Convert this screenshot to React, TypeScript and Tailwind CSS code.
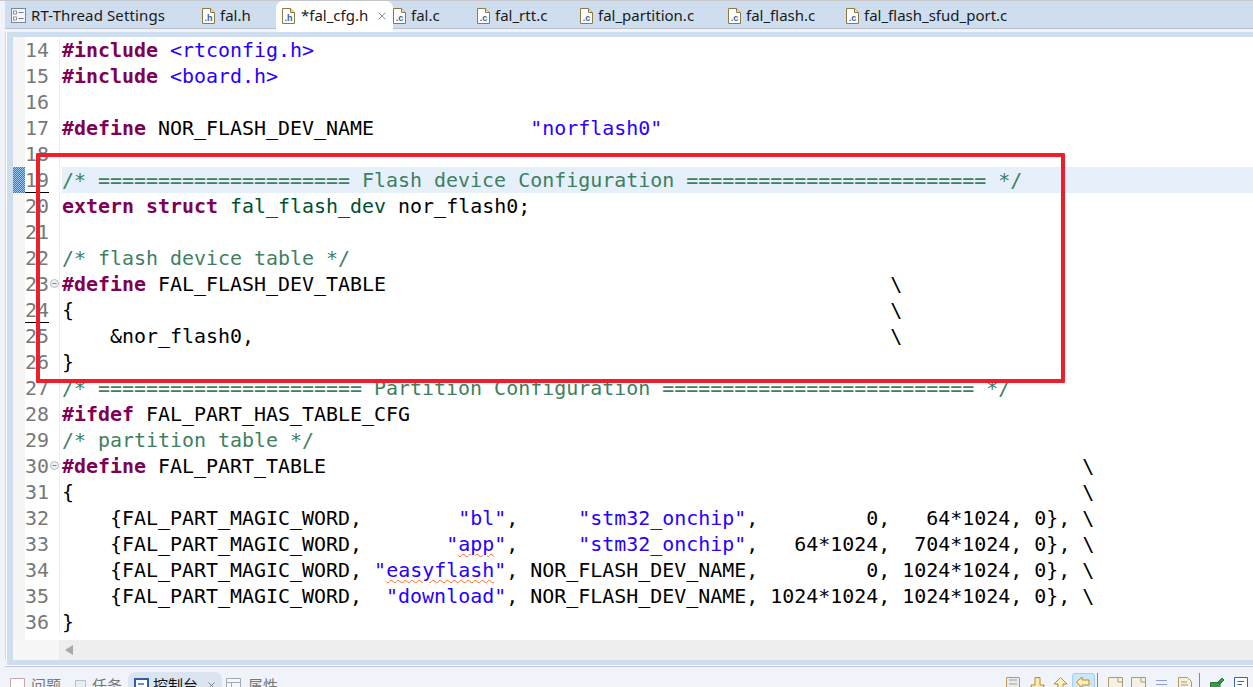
import type { ReactNode } from "react";
import { X } from "lucide-react";

const K = ({ children }: { children: ReactNode }) => (
  <span className="font-bold text-[#7f0055]">{children}</span>
);
const S = ({ children }: { children: ReactNode }) => <span className="text-[#2a00ff]">{children}</span>;
const C = ({ children }: { children: ReactNode }) => <span className="text-[#3f7f5f]">{children}</span>;

const Squiggle = ({ children }: { children: ReactNode }) => (
  <span className="underline decoration-wavy decoration-[#ff6a2a] decoration-1 underline-offset-2">{children}</span>
);

const lines: { n: number; fold?: boolean; active?: boolean; code: ReactNode }[] = [
  { n: 14, code: <><K>#include</K> <S>&lt;rtconfig.h&gt;</S></> },
  { n: 15, code: <><K>#include</K> <S>&lt;board.h&gt;</S></> },
  { n: 16, code: "" },
  { n: 17, code: <><K>#define</K> NOR_FLASH_DEV_NAME             <S>"norflash0"</S></> },
  { n: 18, code: "" },
  { n: 19, active: true, code: <C>/* ===================== Flash device Configuration ========================= */</C> },
  { n: 20, code: <><K>extern struct</K> <span className="text-[#005032]">fal_flash_dev</span> nor_flash0;</> },
  { n: 21, code: "" },
  { n: 22, code: <C>/* flash device table */</C> },
  { n: 23, fold: true, code: <><K>#define</K> FAL_FLASH_DEV_TABLE                                          \</> },
  { n: 24, code: "{                                                                    \\" },
  { n: 25, code: "    &nor_flash0,                                                     \\" },
  { n: 26, code: "}" },
  { n: 27, code: <C>/* ====================== Partition Configuration ========================== */</C> },
  { n: 28, code: <><K>#ifdef</K> FAL_PART_HAS_TABLE_CFG</> },
  { n: 29, code: <C>/* partition table */</C> },
  { n: 30, fold: true, code: <><K>#define</K> FAL_PART_TABLE                                                               \</> },
  { n: 31, code: "{                                                                                    \\" },
  { n: 32, code: <>    {"{"}FAL_PART_MAGIC_WORD,        <S>"bl"</S>,     <S>"stm32_onchip"</S>,         0,   64*1024, 0{"}"}, \</> },
  { n: 33, code: <>    {"{"}FAL_PART_MAGIC_WORD,       <S>"<Squiggle>app</Squiggle>"</S>,     <S>"stm32_onchip"</S>,   64*1024,  704*1024, 0{"}"}, \</> },
  { n: 34, code: <>    {"{"}FAL_PART_MAGIC_WORD, <S>"<Squiggle>easyflash</Squiggle>"</S>, NOR_FLASH_DEV_NAME,         0, 1024*1024, 0{"}"}, \</> },
  { n: 35, code: <>    {"{"}FAL_PART_MAGIC_WORD,  <S>"download"</S>, NOR_FLASH_DEV_NAME, 1024*1024, 1024*1024, 0{"}"}, \</> },
  { n: 36, code: "}" },
];

const FileIcon = ({ letter }: { letter: string }) => (
  <svg width="13" height="16" viewBox="0 0 13 16" className="shrink-0">
    <path d="M0.5 0.5H8.5L12.5 4.5V15.5H0.5Z" fill="#fff" stroke="#8f7a45" />
    <path d="M8.5 0.5V4.5H12.5" fill="#e8e0c4" stroke="#8f7a45" />
    <text x="6.5" y="12.5" textAnchor="middle" fontSize="9" fontWeight="700" fill="#3a5f8f" fontFamily="Liberation Sans, sans-serif">
      {letter}
    </text>
  </svg>
);

const SettingsIcon = () => (
  <svg width="15" height="15" viewBox="0 0 15 15" className="shrink-0">
    <rect x="0.5" y="0.5" width="14" height="14" fill="#f4f6fa" stroke="#7c8794" />
    <rect x="2.5" y="3" width="3" height="3" fill="#fff" stroke="#6c7a8a" strokeWidth="0.8" />
    <rect x="2.5" y="9" width="3" height="3" fill="#fff" stroke="#6c7a8a" strokeWidth="0.8" />
    <path d="M7.5 4.5H12.5M7.5 10.5H12.5" stroke="#6c7a8a" />
  </svg>
);

const tabs = [
  { label: "fal.h", letter: ".h", width: "w-[74px]" },
  { label: "*fal_cfg.h", letter: ".h", width: "w-[117px]", active: true },
  { label: "fal.c", letter: ".c", width: "w-[84px]" },
  { label: "fal_rtt.c", letter: ".c", width: "w-[103px]" },
  { label: "fal_partition.c", letter: ".c", width: "w-[148px]" },
  { label: "fal_flash.c", letter: ".c", width: "w-[118px]" },
  { label: "fal_flash_sfud_port.c", letter: ".c", width: "w-[190px]" },
];

function TabBar() {
  return (
    <div className="relative h-[32px] shrink-0 bg-[#f0f3fa]">
      <div className="h-[1px] bg-[#c6c8cc]" />
      <div className="h-[28px] bg-[#cfdeee] border-b border-[#b9c0cc] ml-[5px]" />
      <div className="absolute left-[5px] top-[1px] flex h-[31px] items-start font-['Noto_Sans'] text-[15px] text-[#1a1a1a]">
        <div className="flex h-[29px] w-[197px] items-center gap-[5px] pl-[6px]">
          <SettingsIcon />
          <span className="tracking-[0.12px]">RT-Thread Settings</span>
        </div>
        {tabs.map((t) => (
          <div
            key={t.label}
            className={
              t.active
                ? `flex h-[31px] ${t.width} items-center gap-[6px] rounded-t-[7px] bg-white pb-[2px] pl-[6px]`
                : `flex h-[29px] ${t.width} items-center gap-[5px] ${t.letter === ".h" ? "pl-0" : "pl-0"}`
            }
          >
            <FileIcon letter={t.letter} />
            <span className="whitespace-nowrap">{t.label}</span>
            {t.active && <X className="ml-[2px] h-[12px] w-[12px] text-[#8a8f96]" strokeWidth={2} />}
          </div>
        ))}
      </div>
    </div>
  );
}

function Row({ n, fold, active, code }: (typeof lines)[number]) {
  return (
    <div className="flex h-[26px] leading-[26px]">
      <div className="relative w-[12px] shrink-0 bg-[#f5f5f5]">
        {active && (
          <div className="h-full w-full bg-[#1b7fd8] bg-[repeating-conic-gradient(#1b7fd8_0_25%,#9cc8f2_0_50%)] bg-[length:2px_2px]" />
        )}
      </div>
      <div className="relative flex w-[34px] shrink-0 bg-white text-[#787878]">
        <span className="w-[24px]">{n}</span>
        {fold && (
          <svg width="9" height="9" viewBox="0 0 9 9" className="absolute left-[25px] top-[8px]">
            <circle cx="4.5" cy="4.5" r="4" fill="#eef0f3" stroke="#b4bac2" />
            <path d="M2.5 4.5H6.5" stroke="#7d8794" />
          </svg>
        )}
        {(n === 19 || n === 24) && <div className="absolute left-0 bottom-0 h-[1px] w-[24px] bg-black" />}
      </div>
      <div className="w-[3px] shrink-0 border-l border-[#eeeeee] bg-white" />
      <div className={`flex-1 whitespace-pre ${active ? "bg-[#e6f0fb]" : "bg-white"}`}>{code}</div>
    </div>
  );
}

function Editor() {
  return (
    <div className="flex h-[628px] shrink-0 bg-[#f0f3fa]">
      <div className="ml-[5px] w-[2px] shrink-0 border-l border-[#d4d8e0] bg-white" />
      <div className="flex min-w-0 flex-1 flex-col bg-[#cfdeee] pl-[6px] pt-[5px]">
        <div className="font-['DejaVu_Sans_Mono'] text-[19.95px] text-black">
          {lines.map((l) => (
            <Row key={l.n} {...l} />
          ))}
        </div>
        <div className="flex h-[5px]">
          <div className="w-[12px] bg-[#f5f5f5]" />
          <div className="w-[34px] bg-white" />
          <div className="flex-1 bg-white" />
        </div>
        <div className="flex h-[20px]">
          <div className="w-[46px] bg-[#f7f7f7]" />
          <div className="flex flex-1 items-center bg-[#eeeeee] pl-[6px]">
            <svg width="8" height="10" viewBox="0 0 8 10">
              <path d="M8 0V10L0 5Z" fill="#a8a8a8" />
            </svg>
          </div>
        </div>
      </div>
    </div>
  );
}

const PlainToolIcon = ({ path, fill, stroke }: { path: string; fill: string; stroke: string }) => (
  <svg width="15" height="15" viewBox="0 0 15 15" className="shrink-0">
    <path d={path} fill={fill} stroke={stroke} />
  </svg>
);

function BottomBar() {
  return (
    <div className="flex-1 bg-[#f0f3fa] font-['Noto_Sans','Noto_Sans_CJK_SC',sans-serif] text-[15px] text-[#777]">
      <div className="h-[5px] bg-[#cfdeee] ml-[7px]" />
      <div className="h-[2px] border-b border-[#c8c4d8] bg-white ml-[5px]" />
      <div className="flex h-[20px] items-start justify-between pt-[5px]">
        <div className="flex items-start pl-[6px]">
          <div className="flex items-center gap-[6px] pl-[4px] pr-[12px] pt-[3px] leading-[20px]">
            <PlainToolIcon path="M0.5 0.5H14.5V14.5H0.5Z" fill="#fff" stroke="#c9a6a6" />
            <span>问题</span>
          </div>
          <div className="flex items-center gap-[4px] pr-[6px] pt-[3px] leading-[20px]">
            <PlainToolIcon path="M2.5 2.5H12.5V14.5H2.5Z" fill="#e8eef6" stroke="#b8bcc4" />
            <span>任务</span>
          </div>
          <div className="flex w-[94px] items-center gap-[4px] rounded-t-[7px] bg-[#dbe5f1] pl-[6px] pt-[3px] leading-[20px] text-[#111]">
            <svg width="15" height="15" viewBox="0 0 15 15" className="shrink-0">
              <rect x="1" y="1" width="13" height="13" fill="#fff" stroke="#2f5fa8" strokeWidth="2" />
              <path d="M4 6H10" stroke="#2f5fa8" strokeWidth="1.4" />
            </svg>
            <span>控制台</span>
            <X className="ml-[4px] h-[11px] w-[11px] text-[#777]" />
          </div>
          <div className="flex items-center gap-[7px] pl-[4px] pt-[3px] leading-[20px]">
            <PlainToolIcon path="M0.5 0.5H14.5V14.5H0.5ZM0.5 4.5H14.5M5.5 4.5V14.5" fill="#f4f6fa" stroke="#a3a9b3" />
            <span>属性</span>
          </div>
        </div>
        <div className="flex items-start pr-[4px] pt-[5px]">
          <div className="mr-[9px]"><PlainToolIcon path="M0.5 0.5H13.5V14.5H0.5ZM3 3H11M3 7H11" fill="#e3edf6" stroke="#c49a58" /></div>
          <div className="mr-[8px]"><PlainToolIcon path="M5 0.5H10V8H14L13 14H2L1 8H5Z" fill="#fbe9b0" stroke="#c08a20" /></div>
          <div className="mr-[4px]"><PlainToolIcon path="M7.5 0.5L14 7H10V14H5V7H1Z" fill="#fdf0c4" stroke="#c08a20" /></div>
          <div className="mr-[2px] -mt-[4px] flex h-[20px] w-[23px] justify-center rounded-t-[3px] border border-[#9fd0f5] bg-[#cde6fa] pt-[2px]">
            <PlainToolIcon path="M0.5 6L6 1V4H13V9H6V12Z" fill="#fdf0c4" stroke="#c08a20" />
          </div>
          <div className="mr-[10px] -mt-[4px] h-[20px] w-[1px] bg-[#888]" />
          <div className="mr-[8px]"><PlainToolIcon path="M0.5 0.5H14.5V14.5H0.5ZM10 0.5V5H14.5" fill="#f4f0e2" stroke="#b09a68" /></div>
          <div className="mr-[9px]"><PlainToolIcon path="M0.5 0.5H14.5V14.5H0.5ZM10 0.5V5H14.5" fill="#f4f0e2" stroke="#b09a68" /></div>
          <div className="mr-[8px]"><PlainToolIcon path="M1 3.5H12M1 7.5H12M1 11.5H12" fill="none" stroke="#8aa0c8" /></div>
          <div className="mr-[6px]"><PlainToolIcon path="M0.5 0.5H9.5L13.5 4.5V14.5H0.5ZM3 5H9M3 8H10" fill="#f4f0e2" stroke="#b09a68" /></div>
          <div className="mr-[10px] -mt-[4px] h-[20px] w-[1px] bg-[#888]" />
          <div className="mr-[9px]"><PlainToolIcon path="M0.5 5.5H10V14.5H0.5ZM8 5L12 1L14 3L10 7Z" fill="#2f9e44" stroke="#2a7a3a" /></div>
          <PlainToolIcon path="M0.5 0.5H13.5V14.5H0.5ZM3.5 4.5H10M3.5 7.5H8" fill="#fff" stroke="#3b64a8" />
        </div>
      </div>
    </div>
  );
}

export default function App() {
  return (
    <div className="relative flex h-[687px] w-[1253px] flex-col overflow-hidden bg-white">
      <TabBar />
      <Editor />
      <BottomBar />
      <div className="absolute left-[36px] top-[153px] h-[230px] w-[1029px] rounded-[1px] border-[4px] border-[#ee1f2b]" />
    </div>
  );
}
